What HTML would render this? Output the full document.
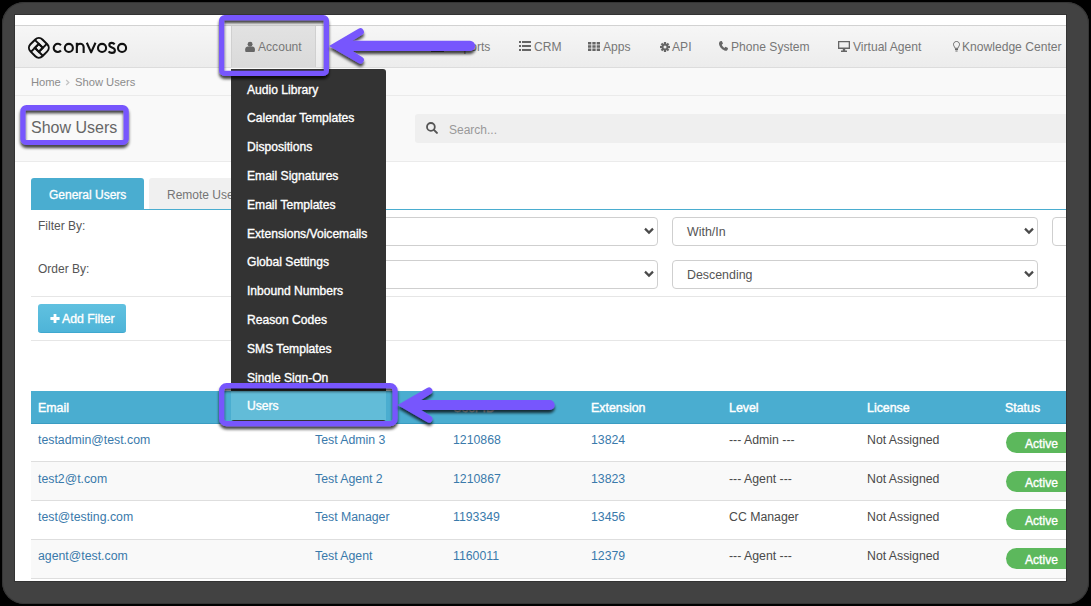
<!DOCTYPE html>
<html><head><meta charset="utf-8">
<style>
html,body{margin:0;padding:0;}
body{width:1091px;height:606px;background:#000;position:relative;overflow:hidden;font-family:"Liberation Sans",sans-serif;}
#frame{position:absolute;left:2px;top:2px;width:1087px;height:602px;border-radius:22px;background:#424242;box-shadow:inset 0 0 0 1px #353535;}
#clip{position:absolute;left:15px;top:15px;width:1051px;height:566px;overflow:hidden;background:#fff;box-shadow:0 0 0 1px #333;}
#pg{position:absolute;left:-15px;top:-15px;width:1200px;height:700px;}
.a{position:absolute;white-space:nowrap;}
#nav{left:0;top:25px;width:1200px;height:43px;box-sizing:border-box;border-top:1px solid #d2d2d2;border-bottom:1px solid #dcdcdc;background:linear-gradient(#f6f6f6,#ececec);}
.nt{font-size:12.1px;color:#777;line-height:14px;top:40px;}
#bc{left:0;top:68px;width:1200px;height:28px;box-sizing:border-box;border-bottom:1px solid #ebebeb;background:#f9f9f9;}
#hd{left:0;top:96px;width:1200px;height:66px;box-sizing:border-box;border-bottom:1px solid #ebebeb;background:#f9f9f9;}
.lbl{font-size:12px;color:#555;line-height:14px;}
.sel{box-sizing:border-box;border:1px solid #cfcfcf;border-radius:4px;background:#fff;height:29px;}
.sel span{position:absolute;left:14px;top:7px;font-size:12.4px;color:#555;line-height:14px;}
.chev{position:absolute;right:3.5px;top:9px;width:10px;height:8px;}
.hl{background:#e6e6e6;height:1px;left:31px;width:1100px;}
.th{font-size:12.4px;color:#fff;line-height:14px;top:401px;-webkit-text-stroke:0.4px #fff;}
.row{left:31px;width:1104px;height:39px;box-sizing:border-box;border-bottom:1px solid #dedede;}
.td{font-size:12.3px;line-height:14px;color:#3a7aab;}
.tk{font-size:12.3px;line-height:14px;color:#4a4a4a;}
.badge{position:absolute;left:1006px;width:70px;height:21px;border-radius:10.5px;background:#5cb85c;}
.badge span{position:absolute;left:19px;top:5px;font-size:12.1px;color:#fff;line-height:14px;-webkit-text-stroke:0.35px #fff;}
#dd{left:231px;top:69px;width:155px;height:352px;background:#333;border-radius:0 3px 3px 3px;}
.di{left:247px;font-size:12.1px;color:#fff;line-height:14px;-webkit-text-stroke:0.35px #fff;}
</style></head><body>
<div id="frame"></div>
<div id="clip"><div id="pg">
  <div id="nav" class="a"></div>
  <!-- logo -->
  <svg class="a" style="left:0;top:0" width="140" height="70" viewBox="0 0 140 70">
    <g transform="translate(38.85,47.85) rotate(45)" fill="none" stroke="#111" stroke-width="2">
      <rect x="-8.45" y="-8.45" width="16.9" height="16.9" rx="5"/>
      <rect x="-2.8" y="-2.8" width="5.6" height="5.6"/>
      <path d="M2.8,-2.8 H-8.45 M2.8,2.8 V-8.45 M-2.8,2.8 H8.45 M-2.8,-2.8 V8.45"/>
    </g>
    <g fill="none" stroke="#111" stroke-width="2.1">
      <path d="M60.94,45.26 A4.1,4.1 0 1 0 60.94,50.54"/>
      <circle cx="68.85" cy="47.9" r="4.05"/>
      <path d="M76.85,42.8 V52.95 M76.85,47.1 A3.4,3.4 0 0 1 83.65,47.1 V52.95"/>
      <path d="M86.8,42.8 L91.15,52.4 L95.5,42.8" stroke-linejoin="round"/>
      <circle cx="102.05" cy="47.9" r="4.05"/>
      <path d="M114.6,44.4 C113.9,43.4 112.9,42.9 111.8,42.9 C110.3,42.9 109.3,43.9 109.3,45.1 C109.3,46.5 110.6,47.1 111.9,47.5 C113.5,48 114.9,48.7 114.9,50.4 C114.9,51.9 113.6,52.9 111.9,52.9 C110.5,52.9 109.3,52.3 108.6,51.3"/>
      <circle cx="122.05" cy="47.9" r="4.05"/>
    </g>
  </svg>

  <!-- nav items -->
  <div class="a" style="left:231px;top:26px;width:85px;height:41px;background:linear-gradient(#e2e2e2,#dadada);border-left:1px solid #d0d0d0;border-right:1px solid #d0d0d0;box-sizing:border-box;"></div>
  <svg class="a" style="left:245px;top:41px" width="10" height="11" viewBox="0 0 10 11"><circle cx="5.1" cy="3.2" r="2.45" fill="#666"/><path d="M0.2,10 V8.2 C0.2,6.5 1.5,5.6 2.8,5.6 H7.4 C8.7,5.6 9.9,6.5 9.9,8.2 V10 C9.9,10.6 9.5,10.9 8.9,10.9 H1.2 C0.6,10.9 0.2,10.6 0.2,10Z" fill="#666"/></svg>
  <div class="a nt" style="left:258px;">Account</div>

  <svg class="a" style="left:431px;top:41px" width="13" height="11" viewBox="0 0 13 11"><path d="M0,0 V11 H13 V9.5 H1.5 V0 Z M3,5 H5 V8.5 H3Z M6,3 H8 V8.5 H6Z M9,1 H11 V8.5 H9Z" fill="#666"/></svg>
  <div class="a nt" style="left:448px;">Reports</div>

  <svg class="a" style="left:519px;top:41px" width="12" height="10" viewBox="0 0 12 10"><path d="M0,0h2v2h-2z M3,0h9v2h-9z M0,4h2v2h-2z M3,4h9v2h-9z M0,8h2v2h-2z M3,8h9v2h-9z" fill="#666"/></svg>
  <div class="a nt" style="left:534px;">CRM</div>

  <svg class="a" style="left:588px;top:42px" width="12" height="9" viewBox="0 0 12 9"><path d="M0,0h3.3v2.4h-3.3z M4.35,0h3.3v2.4h-3.3z M8.7,0h3.3v2.4h-3.3z M0,3.3h3.3v2.4h-3.3z M4.35,3.3h3.3v2.4h-3.3z M8.7,3.3h3.3v2.4h-3.3z M0,6.6h3.3v2.4h-3.3z M4.35,6.6h3.3v2.4h-3.3z M8.7,6.6h3.3v2.4h-3.3z" fill="#666"/></svg>
  <div class="a nt" style="left:603px;">Apps</div>

  <svg class="a" style="left:659.5px;top:41.5px" width="10" height="10" viewBox="-5 -5 10 10"><g fill="#666"><circle r="3.4"/><rect x="-1.1" y="-5" width="2.2" height="10"/><rect x="-1.1" y="-5" width="2.2" height="10" transform="rotate(45)"/><rect x="-1.1" y="-5" width="2.2" height="10" transform="rotate(90)"/><rect x="-1.1" y="-5" width="2.2" height="10" transform="rotate(135)"/></g><circle r="1.5" fill="#eee"/></svg>
  <div class="a nt" style="left:672px;">API</div>

  <svg class="a" style="left:719px;top:41px" width="9" height="10" viewBox="0 0 9 10"><path d="M1.2,0.3 L2.8,0 L4,2.6 L2.8,3.8 C3.3,5.2 4.2,6.2 5.3,6.9 L6.5,5.7 L9,7 L8.7,8.6 C8.3,9.6 7.4,10 6.6,9.8 C3.4,9 0.6,6.3 0,3 C-0.1,2 0.4,0.7 1.2,0.3Z" fill="#666"/></svg>
  <div class="a nt" style="left:731px;">Phone System</div>

  <svg class="a" style="left:838px;top:41px" width="12" height="11" viewBox="0 0 12 11"><path d="M0,0 H12 V8 H7.2 V9.5 H9 V11 H3 V9.5 H4.8 V8 H0 Z M1.3,1.2 V6.6 H10.7 V1.2 Z" fill="#666"/></svg>
  <div class="a nt" style="left:853px;">Virtual Agent</div>

  <svg class="a" style="left:953px;top:41px" width="7" height="11" viewBox="0 0 7 11"><path d="M3.5,0.5 C1.6,0.5 0.5,1.9 0.5,3.4 C0.5,5 1.8,5.7 2,7.3 H5 C5.2,5.7 6.5,5 6.5,3.4 C6.5,1.9 5.4,0.5 3.5,0.5Z" fill="none" stroke="#666" stroke-width="1"/><path d="M2,8 H5 V9 H2Z M2.4,9.6 H4.6 V10.6 H2.4Z" fill="#666"/></svg>
  <div class="a nt" style="left:962px;">Knowledge Center</div>

  <!-- breadcrumb -->
  <div id="bc" class="a"></div>
  <div class="a" style="left:31px;top:75px;font-size:11.2px;line-height:14px;color:#8c8c8c;">Home</div>
  <svg class="a" style="left:65px;top:79px" width="5" height="7" viewBox="0 0 5 7"><path d="M1.2,1 L3.8,3.5 L1.2,6" fill="none" stroke="#c4c4c4" stroke-width="1.3"/></svg>
  <div class="a" style="left:75px;top:75px;font-size:11.2px;line-height:14px;color:#8c8c8c;">Show Users</div>

  <!-- header -->
  <div id="hd" class="a"></div>
  <div class="a" style="left:31px;top:118px;font-size:16px;line-height:20px;color:#666;">Show Users</div>
  <div class="a" style="left:415px;top:114px;width:800px;height:29px;background:#efefef;border-radius:3px;"></div>
  <svg class="a" style="left:426px;top:122px" width="12" height="12" viewBox="0 0 12 12"><circle cx="4.9" cy="4.9" r="3.9" fill="none" stroke="#555" stroke-width="1.8"/><path d="M7.9,7.9 L10.9,10.9" stroke="#555" stroke-width="2" stroke-linecap="round"/></svg>
  <div class="a" style="left:449px;top:123px;font-size:12px;line-height:14px;color:#999;">Search...</div>

  <!-- tabs -->
  <div class="a" style="left:31px;top:178px;width:113px;height:31px;background:#4aadd0;border-radius:3px 3px 0 0;"></div>
  <div class="a" style="left:49px;top:188px;font-size:12px;line-height:14px;color:#fff;-webkit-text-stroke:0.3px #fff;">General Users</div>
  <div class="a" style="left:149px;top:178px;width:113px;height:31px;background:#f0f0f0;border-radius:3px 3px 0 0;"></div>
  <div class="a" style="left:167px;top:188px;font-size:12px;line-height:14px;color:#757575;">Remote Users</div>
  <div class="a" style="left:31px;top:209px;width:1100px;height:1px;background:#4aadd0;"></div>

  <!-- filters -->
  <div class="a lbl" style="left:38px;top:219px;">Filter By:</div>
  <div class="a lbl" style="left:38px;top:262px;">Order By:</div>
  <div class="a sel" style="left:292px;top:217px;width:366px;"><svg class="chev" viewBox="0 0 10 8"><path d="M1,1.6 L5,5.6 L9,1.6" fill="none" stroke="#4a4a4a" stroke-width="2.2"/></svg></div>
  <div class="a sel" style="left:672px;top:217px;width:366px;"><span>With/In</span><svg class="chev" viewBox="0 0 10 8"><path d="M1,1.6 L5,5.6 L9,1.6" fill="none" stroke="#4a4a4a" stroke-width="2.2"/></svg></div>
  <div class="a sel" style="left:1052px;top:217px;width:366px;"></div>
  <div class="a sel" style="left:292px;top:260px;width:366px;"><svg class="chev" viewBox="0 0 10 8"><path d="M1,1.6 L5,5.6 L9,1.6" fill="none" stroke="#4a4a4a" stroke-width="2.2"/></svg></div>
  <div class="a sel" style="left:672px;top:260px;width:366px;"><span>Descending</span><svg class="chev" viewBox="0 0 10 8"><path d="M1,1.6 L5,5.6 L9,1.6" fill="none" stroke="#4a4a4a" stroke-width="2.2"/></svg></div>
  <div class="a hl" style="top:296px;"></div>
  <div class="a" style="left:38px;top:304px;width:88px;height:29px;background:linear-gradient(#60c1e0,#4eb4d8);border-radius:3px;box-sizing:border-box;border-bottom:1px solid #3fa8cf;"></div>
  <svg class="a" style="left:50px;top:314px" width="10" height="9" viewBox="0 0 10 9"><path d="M3.6,0 H6.4 V3.1 H9.6 V5.9 H6.4 V9 H3.6 V5.9 H0.4 V3.1 H3.6Z" fill="#fff"/></svg>
  <div class="a" style="left:62px;top:312px;font-size:12.3px;line-height:14px;color:#fff;-webkit-text-stroke:0.35px #fff;">Add Filter</div>
  <div class="a hl" style="top:340px;"></div>

  <!-- table -->
  <div class="a" style="left:31px;top:391px;width:1104px;height:33px;background:#4aadd0;box-sizing:border-box;border-bottom:1px solid #3a9cc2;"></div>
  <div class="a th" style="left:38px;">Email</div>
  <div class="a th" style="left:315px;">Name</div>
  <div class="a th" style="left:453px;">User ID</div>
  <div class="a th" style="left:591px;">Extension</div>
  <div class="a th" style="left:729px;">Level</div>
  <div class="a th" style="left:867px;">License</div>
  <div class="a th" style="left:1005px;">Status</div>

  <div class="a row" style="top:424px;height:38px;background:#fff;"></div>
  <div class="a row" style="top:462px;background:#f9f9f9;"></div>
  <div class="a row" style="top:501px;background:#fff;"></div>
  <div class="a row" style="top:540px;background:#f9f9f9;"></div>

  <div class="a td" style="left:38px;top:433px;">testadmin@test.com</div>
  <div class="a td" style="left:315px;top:433px;">Test Admin 3</div>
  <div class="a td" style="left:453px;top:433px;">1210868</div>
  <div class="a td" style="left:591px;top:433px;">13824</div>
  <div class="a tk" style="left:729px;top:433px;">--- Admin ---</div>
  <div class="a tk" style="left:867px;top:433px;">Not Assigned</div>
  <div class="badge" style="top:432px;"><span>Active</span></div>

  <div class="a td" style="left:38px;top:472px;">test2@t.com</div>
  <div class="a td" style="left:315px;top:472px;">Test Agent 2</div>
  <div class="a td" style="left:453px;top:472px;">1210867</div>
  <div class="a td" style="left:591px;top:472px;">13823</div>
  <div class="a tk" style="left:729px;top:472px;">--- Agent ---</div>
  <div class="a tk" style="left:867px;top:472px;">Not Assigned</div>
  <div class="badge" style="top:471px;"><span>Active</span></div>

  <div class="a td" style="left:38px;top:510px;">test@testing.com</div>
  <div class="a td" style="left:315px;top:510px;">Test Manager</div>
  <div class="a td" style="left:453px;top:510px;">1193349</div>
  <div class="a td" style="left:591px;top:510px;">13456</div>
  <div class="a tk" style="left:729px;top:510px;">CC Manager</div>
  <div class="a tk" style="left:867px;top:510px;">Not Assigned</div>
  <div class="badge" style="top:509px;"><span>Active</span></div>

  <div class="a td" style="left:38px;top:549px;">agent@test.com</div>
  <div class="a td" style="left:315px;top:549px;">Test Agent</div>
  <div class="a td" style="left:453px;top:549px;">1160011</div>
  <div class="a td" style="left:591px;top:549px;">12379</div>
  <div class="a tk" style="left:729px;top:549px;">--- Agent ---</div>
  <div class="a tk" style="left:867px;top:549px;">Not Assigned</div>
  <div class="badge" style="top:548px;"><span>Active</span></div>

  <!-- dropdown -->
  <div id="dd" class="a"></div>
  <div class="a" style="left:231px;top:391px;width:155px;height:29px;background:#62bcd8;"></div>
  <div class="a di" style="top:83px;">Audio Library</div>
  <div class="a di" style="top:111px;">Calendar Templates</div>
  <div class="a di" style="top:140px;">Dispositions</div>
  <div class="a di" style="top:169px;">Email Signatures</div>
  <div class="a di" style="top:198px;">Email Templates</div>
  <div class="a di" style="top:227px;">Extensions/Voicemails</div>
  <div class="a di" style="top:255px;">Global Settings</div>
  <div class="a di" style="top:284px;">Inbound Numbers</div>
  <div class="a di" style="top:313px;">Reason Codes</div>
  <div class="a di" style="top:342px;">SMS Templates</div>
  <div class="a di" style="top:371px;">Single Sign-On</div>
  <div class="a di" style="top:399px;">Users</div>
</div></div>

<!-- annotations -->
<svg style="position:absolute;left:0;top:0" width="1091" height="606" viewBox="0 0 1091 606">
  <defs>
    <filter id="sh" x="-20%" y="-30%" width="140%" height="180%">
      <feGaussianBlur in="SourceAlpha" stdDeviation="1.8"/>
      <feOffset dx="0" dy="2.5"/>
      <feComponentTransfer><feFuncA type="linear" slope="0.75"/></feComponentTransfer>
      <feMerge><feMergeNode/><feMergeNode in="SourceGraphic"/></feMerge>
    </filter>
  </defs>
  <g fill="none" stroke="#7757fd" stroke-width="5.2" filter="url(#sh)">
    <rect x="221.6" y="17.6" width="104.8" height="55.8" rx="3"/>
    <rect x="22.9" y="107.6" width="103.3" height="34.9" rx="3.6"/>
    <rect x="221.6" y="385.6" width="173.5" height="38.1" rx="5"/>
  </g>
  <g fill="#7757fd" filter="url(#sh)">
    <path d="M329.00,45.90 L358.45,28.87 A3.5,3.5 0 1 1 362.05,34.87 L352.50,40.80 L470.00,40.80 A5.10,5.10 0 0 1 470.00,51.00 L352.50,51.00 L362.05,56.93 A3.5,3.5 0 1 1 358.45,62.93 Z"/>
    <path d="M397.60,405.00 L427.05,387.97 A3.5,3.5 0 1 1 430.65,393.97 L421.10,399.90 L549.60,399.90 A5.10,5.10 0 0 1 549.60,410.10 L421.10,410.10 L430.65,416.03 A3.5,3.5 0 1 1 427.05,422.03 Z"/>
  </g>
</svg>
</body></html>
